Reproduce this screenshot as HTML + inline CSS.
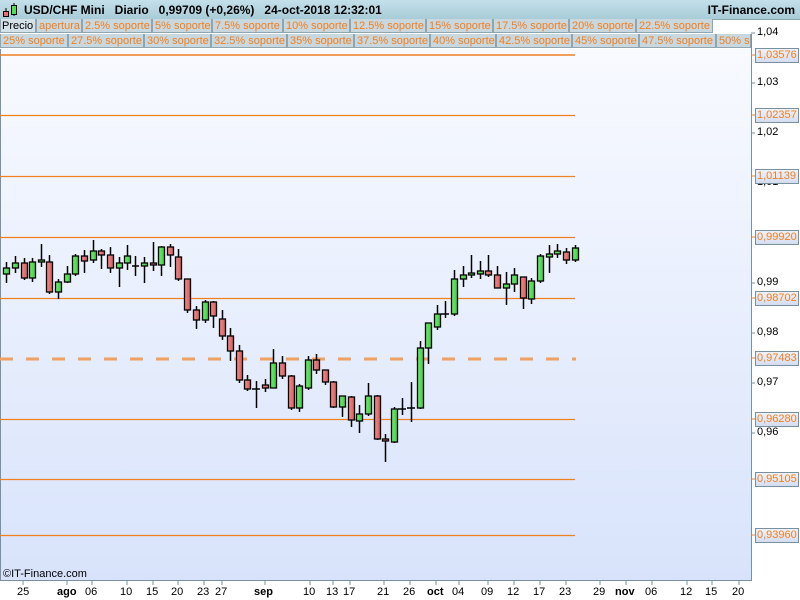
<!DOCTYPE html>
<html><head><meta charset="utf-8"><style>
body{margin:0;width:800px;height:600px;overflow:hidden;background:#fff;font-family:"Liberation Sans",sans-serif;position:relative}
.hdr{position:absolute;left:0;top:0;width:800px;height:19px;background:linear-gradient(#c4e0ea,#a8ccd8);border-bottom:1px solid #8aa}
.t{position:absolute;top:3px;font-size:12px;font-weight:bold;color:#000;white-space:nowrap}
.row{position:absolute;left:0;height:15px}
.tab{position:absolute;top:0;height:14px;background:#c9d7df;border:1px solid #8fa5b0;border-top:none;box-sizing:border-box;font-size:11px;color:#f08020;line-height:14px;padding-left:2px;white-space:nowrap;overflow:hidden}
.lb{position:absolute;font-size:11px;color:#000;white-space:nowrap}
.ob{position:absolute;left:755px;width:44px;height:15px;box-sizing:border-box;border:1px solid #7890a0;background:linear-gradient(#eef2fb,#d4ddf0);color:#f08020;font-size:11px;line-height:13px;padding-left:1px;white-space:nowrap;overflow:hidden}
.xl{position:absolute;top:586px;font-size:11px;color:#000}
.xl b{font-weight:bold}
</style></head><body>
<div class="hdr"></div>
<svg style="position:absolute;left:2px;top:2px" width="18" height="16"><line x1="4" y1="6" x2="4" y2="15" stroke="#000"/><rect x="1.5" y="9.5" width="5" height="5" fill="#e87070" stroke="#000"/><line x1="12" y1="1" x2="12" y2="14" stroke="#000"/><rect x="9.5" y="3.5" width="5" height="9" fill="#55dd55" stroke="#000"/></svg>
<div class="t" style="left:24px">USD/CHF Mini&nbsp;&nbsp;&nbsp;Diario&nbsp;&nbsp;&nbsp;0,99709 (+0,26%)&nbsp;&nbsp;&nbsp;24-oct-2018 12:32:01</div>
<div class="t" style="right:5px">IT-Finance.com</div>
<div class="row" style="top:19px;width:751px">
<div class="tab" style="left:0;width:36px;color:#000;background:#d6e2ea;padding-left:1px">Precio</div>
<div class="tab" style="left:36px;width:46px">apertura</div>
<div class="tab" style="left:82px;width:70px">2.5% soporte</div>
<div class="tab" style="left:152px;width:60px">5% soporte</div>
<div class="tab" style="left:212px;width:71px">7.5% soporte</div>
<div class="tab" style="left:283px;width:67px">10% soporte</div>
<div class="tab" style="left:350px;width:76px">12.5% soporte</div>
<div class="tab" style="left:426px;width:67px">15% soporte</div>
<div class="tab" style="left:493px;width:76px">17.5% soporte</div>
<div class="tab" style="left:569px;width:67px">20% soporte</div>
<div class="tab" style="left:636px;width:77px">22.5% soporte</div>
</div>
<div class="row" style="top:34px;width:751px">
<div class="tab" style="left:0;width:68px">25% soporte</div>
<div class="tab" style="left:68px;width:76px">27.5% soporte</div>
<div class="tab" style="left:144px;width:67px">30% soporte</div>
<div class="tab" style="left:211px;width:76px">32.5% soporte</div>
<div class="tab" style="left:287px;width:67px">35% soporte</div>
<div class="tab" style="left:354px;width:76px">37.5% soporte</div>
<div class="tab" style="left:430px;width:66px">40% soporte</div>
<div class="tab" style="left:496px;width:76px">42.5% soporte</div>
<div class="tab" style="left:572px;width:67px">45% soporte</div>
<div class="tab" style="left:639px;width:77px">47.5% soporte</div>
<div class="tab" style="left:716px;width:35px">50% soporte</div>
</div>
<svg style="position:absolute;left:0;top:0" width="800" height="600">
<defs><linearGradient id="bg" x1="0" y1="0" x2="0" y2="1"><stop offset="0" stop-color="#f8faff"/><stop offset="1" stop-color="#d8e3fb"/></linearGradient>
<linearGradient id="rd" x1="0" y1="0" x2="1" y2="0"><stop offset="0" stop-color="#f09090"/><stop offset="1" stop-color="#d85858"/></linearGradient>
<linearGradient id="gr" x1="0" y1="0" x2="1" y2="0"><stop offset="0" stop-color="#70ee70"/><stop offset="1" stop-color="#40cc40"/></linearGradient></defs>
<rect x="0" y="49" width="751" height="531" fill="url(#bg)"/>
<line x1="0.5" y1="49" x2="0.5" y2="580" stroke="#7890a0"/>
<line x1="751.5" y1="34" x2="751.5" y2="581" stroke="#7890a0"/>
<line x1="0" y1="580.5" x2="752" y2="580.5" stroke="#7890a0"/>
<g stroke="#f08020" stroke-width="1.2">
<line x1="0" y1="55" x2="575" y2="55" stroke-width="1.6"/>
<line x1="0" y1="115.5" x2="575" y2="115.5"/>
<line x1="0" y1="176.5" x2="575" y2="176.5"/>
<line x1="0" y1="237.5" x2="575" y2="237.5"/>
<line x1="0" y1="298.5" x2="575" y2="298.5"/>
<line x1="0" y1="419.5" x2="575" y2="419.5"/>
<line x1="0" y1="479.5" x2="575" y2="479.5"/>
<line x1="0" y1="535.5" x2="575" y2="535.5"/>
</g>
<line x1="0" y1="359" x2="576" y2="359" stroke="#f0a060" stroke-width="3" stroke-dasharray="13,13"/>
<g stroke="#7890a0"><line x1="751" y1="33" x2="755" y2="33"/><line x1="751" y1="83" x2="755" y2="83"/><line x1="751" y1="133" x2="755" y2="133"/><line x1="751" y1="283" x2="755" y2="283"/><line x1="751" y1="333" x2="755" y2="333"/><line x1="751" y1="383" x2="755" y2="383"/><line x1="751" y1="433" x2="755" y2="433"/></g>
<g stroke="#f08020"><line x1="751" y1="55" x2="755" y2="55"/><line x1="751" y1="115" x2="755" y2="115"/><line x1="751" y1="176" x2="755" y2="176"/><line x1="751" y1="237" x2="755" y2="237"/><line x1="751" y1="298" x2="755" y2="298"/><line x1="751" y1="358" x2="755" y2="358"/><line x1="751" y1="419" x2="755" y2="419"/><line x1="751" y1="479" x2="755" y2="479"/><line x1="751" y1="535" x2="755" y2="535"/></g>
<g stroke="#7890a0"><line x1="23" y1="580" x2="23" y2="585"/><line x1="67" y1="580" x2="67" y2="585"/><line x1="92" y1="580" x2="92" y2="585"/><line x1="127" y1="580" x2="127" y2="585"/><line x1="153" y1="580" x2="153" y2="585"/><line x1="178" y1="580" x2="178" y2="585"/><line x1="204" y1="580" x2="204" y2="585"/><line x1="222" y1="580" x2="222" y2="585"/><line x1="265" y1="580" x2="265" y2="585"/><line x1="310" y1="580" x2="310" y2="585"/><line x1="333" y1="580" x2="333" y2="585"/><line x1="350" y1="580" x2="350" y2="585"/><line x1="384" y1="580" x2="384" y2="585"/><line x1="410" y1="580" x2="410" y2="585"/><line x1="436" y1="580" x2="436" y2="585"/><line x1="459" y1="580" x2="459" y2="585"/><line x1="488" y1="580" x2="488" y2="585"/><line x1="514" y1="580" x2="514" y2="585"/><line x1="540" y1="580" x2="540" y2="585"/><line x1="566" y1="580" x2="566" y2="585"/><line x1="600" y1="580" x2="600" y2="585"/><line x1="626" y1="580" x2="626" y2="585"/><line x1="652" y1="580" x2="652" y2="585"/><line x1="687" y1="580" x2="687" y2="585"/><line x1="712" y1="580" x2="712" y2="585"/><line x1="739" y1="580" x2="739" y2="585"/></g>
<g stroke="#000" stroke-width="1.5">
<path d="M6.5 262V283M15.5 256V273M24.5 258V280M32.5 258V282M41.5 244V267M49.5 255V294M58.5 279V299M67.5 266V283M75.5 254V276M84.5 250V273M93.5 240V263M101.5 249V269M110.5 247V273M119.5 257V287M127.5 245V270M135.5 256V276M144.5 257V283M153.5 242V271M161.5 246V276M170.5 244V267M178.5 249V281M187.5 279V313M196.5 306V329M205.5 300V323M213.5 301V328M222.5 310V340M230.5 328V361M239.5 345V383M247.5 375V391M256.5 381V408M265.5 379V392M273.5 349V388M282.5 356V379M291.5 375V410M299.5 384V412M308.5 356V390M316.5 354V374M325.5 370V385M333.5 381V408M342.5 396V417M351.5 396V427M359.5 405V433M368.5 383V416M377.5 395V440M385.5 434V462M394.5 407V443M402.5 398V415M411.5 382V422M420.5 341V409M428.5 323V364M437.5 305V330M445.5 301V318M454.5 270V316M463.5 266V287M471.5 255V278M480.5 261V279M488.5 255V277M497.5 266V288M506.5 272V305M514.5 268V292M523.5 277V309M531.5 278V304M540.5 254V283M549.5 245V273M557.5 244V258M566.5 248V264M575.5 245V262"/>
<path d="M132 266H139M252 389H260M398 409H406M407 408H415M441 314H449"/>
</g>
<g stroke="#000" stroke-width="1.3" fill="url(#gr)">
<rect x="3.5" y="268" width="6" height="6"/><rect x="12.5" y="263" width="6" height="5"/><rect x="29.5" y="262" width="6" height="16"/><rect x="38.5" y="260" width="6" height="2"/><rect x="55.5" y="282" width="6" height="10"/><rect x="64.5" y="274" width="6" height="8"/><rect x="72.5" y="256" width="6" height="18"/><rect x="90.5" y="251" width="6" height="9"/><rect x="116.5" y="263" width="6" height="5"/><rect x="124.5" y="256" width="6" height="7"/><rect x="141.5" y="263" width="6" height="3"/><rect x="158.5" y="247" width="6" height="18"/><rect x="202.5" y="302" width="6" height="18"/><rect x="270.5" y="363" width="6" height="25"/><rect x="296.5" y="386" width="6" height="22"/><rect x="305.5" y="360" width="6" height="28"/><rect x="339.5" y="396" width="6" height="11"/><rect x="356.5" y="414" width="6" height="7"/><rect x="365.5" y="396" width="6" height="18"/><rect x="391.5" y="409" width="6" height="33"/><rect x="417.5" y="348" width="6" height="60"/><rect x="425.5" y="323" width="6" height="25"/><rect x="434.5" y="314" width="6" height="13"/><rect x="451.5" y="279" width="6" height="35"/><rect x="460.5" y="275" width="6" height="4"/><rect x="468.5" y="273" width="6" height="2"/><rect x="477.5" y="271" width="6" height="3"/><rect x="503.5" y="284" width="6" height="4"/><rect x="511.5" y="275" width="6" height="9"/><rect x="528.5" y="281" width="6" height="18"/><rect x="537.5" y="256" width="6" height="25"/><rect x="546.5" y="254" width="6" height="3"/><rect x="554.5" y="251" width="6" height="3"/><rect x="572.5" y="248" width="6" height="12"/>
</g>
<g stroke="#000" stroke-width="1.3" fill="url(#rd)">
<rect x="21.5" y="263" width="6" height="15"/><rect x="46.5" y="262" width="6" height="30"/><rect x="81.5" y="256" width="6" height="5"/><rect x="98.5" y="251" width="6" height="4"/><rect x="107.5" y="255" width="6" height="13"/><rect x="150.5" y="263" width="6" height="2"/><rect x="167.5" y="247" width="6" height="8"/><rect x="175.5" y="257" width="6" height="22"/><rect x="184.5" y="279" width="6" height="31"/><rect x="193.5" y="310" width="6" height="10"/><rect x="210.5" y="302" width="6" height="14"/><rect x="219.5" y="319" width="6" height="17"/><rect x="227.5" y="336" width="6" height="15"/><rect x="236.5" y="351" width="6" height="29"/><rect x="244.5" y="380" width="6" height="9"/><rect x="262.5" y="385" width="6" height="3"/><rect x="279.5" y="363" width="6" height="13"/><rect x="288.5" y="376" width="6" height="32"/><rect x="313.5" y="360" width="6" height="10"/><rect x="322.5" y="370" width="6" height="12"/><rect x="330.5" y="382" width="6" height="25"/><rect x="348.5" y="397" width="6" height="23"/><rect x="374.5" y="396" width="6" height="43"/><rect x="382.5" y="439" width="6" height="2"/><rect x="485.5" y="271" width="6" height="4"/><rect x="494.5" y="275" width="6" height="13"/><rect x="520.5" y="277" width="6" height="21"/><rect x="563.5" y="252" width="6" height="8"/>
</g>
</svg>
<div class="lb" style="left:757px;top:26px">1,04</div>
<div class="lb" style="left:757px;top:76px">1,03</div>
<div class="lb" style="left:757px;top:126px">1,02</div>
<div class="lb" style="left:757px;top:176px">1,01</div>
<div class="lb" style="left:757px;top:276px">0,99</div>
<div class="lb" style="left:757px;top:326px">0,98</div>
<div class="lb" style="left:757px;top:376px">0,97</div>
<div class="lb" style="left:757px;top:426px">0,96</div>
<div class="ob" style="top:48px">1,03576</div>
<div class="ob" style="top:108px">1,02357</div>
<div class="ob" style="top:169px">1,01139</div>
<div class="ob" style="top:230px">0,99920</div>
<div class="ob" style="top:291px">0,98702</div>
<div class="ob" style="top:351px">0,97483</div>
<div class="ob" style="top:412px">0,96280</div>
<div class="ob" style="top:472px">0,95105</div>
<div class="ob" style="top:528px">0,93960</div>
<div class="lb" style="left:3px;top:568px">©IT-Finance.com</div>
<div class="xl" style="left:17px">25</div><div class="xl" style="left:57px"><b>ago</b></div><div class="xl" style="left:85px">06</div><div class="xl" style="left:120px">10</div><div class="xl" style="left:146px">15</div><div class="xl" style="left:171px">20</div><div class="xl" style="left:197px">23</div><div class="xl" style="left:215px">27</div><div class="xl" style="left:254px"><b>sep</b></div><div class="xl" style="left:303px">10</div><div class="xl" style="left:326px">13</div><div class="xl" style="left:343px">17</div><div class="xl" style="left:377px">21</div><div class="xl" style="left:403px">26</div><div class="xl" style="left:427px"><b>oct</b></div><div class="xl" style="left:452px">04</div><div class="xl" style="left:481px">09</div><div class="xl" style="left:507px">12</div><div class="xl" style="left:533px">17</div><div class="xl" style="left:559px">23</div><div class="xl" style="left:593px">29</div><div class="xl" style="left:615px"><b>nov</b></div><div class="xl" style="left:645px">06</div><div class="xl" style="left:680px">12</div><div class="xl" style="left:705px">15</div><div class="xl" style="left:732px">20</div>
</body></html>
